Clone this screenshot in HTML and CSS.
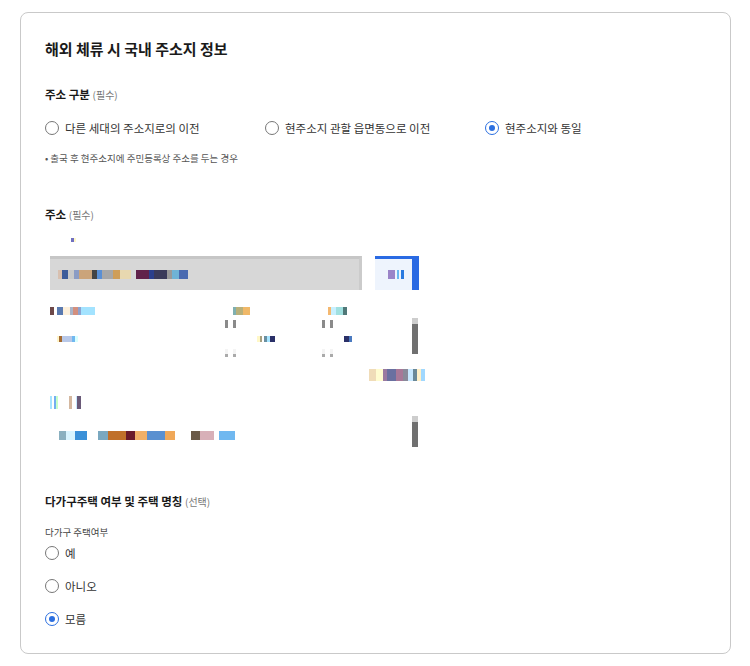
FILE: index.html
```html
<!DOCTYPE html>
<html>

<head>
    <link rel="stylesheet" href="styles.css">
</head>

<body>
  <div class="card">
    <h2 class="card-title">해외 체류 시 국내 주소지 정보</h2>

    <div class="field">
      <div class="field-label">주소 구분 <span class="hint">(필수)</span></div>
      <div class="radio-row">
        <label class="radio"><span class="dot"></span>다른 세대의 주소지로의 이전</label>
        <label class="radio"><span class="dot"></span>현주소지 관할 읍면동으로 이전</label>
        <label class="radio"><span class="dot on"></span>현주소지와 동일</label>
      </div>
      <p class="note">• 출국 후 현주소지에 주민등록상 주소를 두는 경우</p>
    </div>

    <div class="field addr">
      <div class="field-label">주소 <span class="hint">(필수)</span></div>
      <div class="frame">
        <div class="frame-top"><span class="blob b-tiny"></span></div>
        <div class="search">
          <div class="search-input"><span class="blob b-query"></span></div>
          <div class="search-btn"><span class="blob b-btn"></span></div>
        </div>
        <div class="results">
          <div class="res-row">
            <span class="blob b-r1 w45"></span>
            <span class="blob b-r2 w17 at138"></span>
            <span class="blob b-r3 w19 at78"></span>
          </div>
          <div class="res-row ticks">
            <span class="tick at175"></span><span class="tick at5"></span>
            <span class="tick at86"></span><span class="tick at5"></span>
          </div>
          <div class="res-row">
            <span class="blob b-r4 w21 at7"></span>
            <span class="blob b-r5 w18 at179"></span>
            <span class="blob b-r6 w8 at69"></span>
          </div>
          <div class="res-row ticks light">
            <span class="tick at175"></span><span class="tick at5"></span>
            <span class="tick at86"></span><span class="tick at5"></span>
          </div>
          <span class="scroll s1"></span>
        </div>
        <div class="res-row tall end"><span class="blob b-r7 w56"></span></div>
        <div class="res-row tall gap13">
          <span class="blob b-r8 w8"></span>
          <span class="blob b-r9 w12 at11"></span>
        </div>
        <div class="results low">
          <div class="res-row tall"><span class="blob b-r10 w176 at9"></span></div>
          <span class="scroll s2"></span>
        </div>
      </div>
    </div>

    <div class="field multi">
      <div class="field-label">다가구주택 여부 및 주택 명칭 <span class="hint">(선택)</span></div>
      <div class="sub-label">다가구 주택여부</div>
      <div class="radio-col">
        <label class="radio"><span class="dot"></span>예</label>
        <label class="radio"><span class="dot"></span>아니오</label>
        <label class="radio"><span class="dot on"></span>모름</label>
      </div>
    </div>
  </div>
</body>
</html>
```

FILE: styles.css
```css
body {
  font-family: 'Noto Sans CJK KR', 'Noto Sans', sans-serif;
  background-color: #fff;
  color: #222;
  margin: 0;
  padding: 12px 0 0 20px;
}

.card {
  width: 711px;
  height: 642px;
  border: 1px solid #c9c9c9;
  border-radius: 8px;
  padding: 0 24px;
  box-sizing: border-box;
}

.card-title {
  font-size: 15px;
  font-weight: bold;
  margin: 25px 0 0;
  line-height: 22px;
  color: #1a1a1a;
}

.field {
  margin-top: 26px;
}

.field-label {
  font-size: 11.5px;
  font-weight: bold;
  line-height: 16px;
  color: #1a1a1a;
}

.hint {
  font-size: 10px;
  font-weight: normal;
  color: #777;
}

.radio-row {
  display: flex;
  margin-top: 16px;
}

.radio-row .radio {
  width: 220px;
}

.radio {
  display: flex;
  align-items: center;
  font-size: 11.5px;
  line-height: 18px;
  color: #333;
}

.dot {
  width: 14px;
  height: 14px;
  border: 1.5px solid #777;
  border-radius: 50%;
  box-sizing: border-box;
  margin-right: 6px;
  position: relative;
}

.dot.on {
  border-color: #2b6fe0;
}

.dot.on::after {
  content: "";
  position: absolute;
  left: 2.5px;
  top: 2.5px;
  width: 6px;
  height: 6px;
  border-radius: 50%;
  background-color: #2b6fe0;
}

.note {
  font-size: 9.5px;
  color: #555;
  margin: 14px 0 0;
  line-height: 14px;
}

.addr {
  margin-top: 41px;
}

.multi {
  margin-top: 51px;
}

.frame {
  width: 375px;
  margin-left: 5px;
}

.frame-top {
  height: 33px;
  display: flex;
  align-items: center;
}

.search {
  display: flex;
  gap: 13px;
  height: 34px;
}

.search-input {
  width: 312px;
  background-color: #d7d7d7;
  border-top: 3px solid #c6c6c6;
  border-right: 3px solid #cbcbcb;
  box-sizing: border-box;
  display: flex;
  align-items: center;
  padding-left: 8px;
}

.search-btn {
  width: 44px;
  background-color: #eef4fd;
  border-top: 3px solid #2a6ae3;
  border-right: 7px solid #2a6ae3;
  box-sizing: border-box;
  display: flex;
  align-items: center;
  justify-content: center;
}

.results {
  position: relative;
  margin-top: 17px;
}

.results.low {
  margin-top: 0;
  padding-top: 9px;
}

.res-row {
  display: flex;
  height: 8px;
  margin-bottom: 5px;
}

.res-row.tall {
  height: 14px;
  align-items: center;
  margin: 10px 0 0;
}

.res-row.gap13 {
  margin-top: 13px;
}

.res-row.end {
  justify-content: flex-end;
  margin-top: 11px;
}

.ticks {
  height: 8px;
  margin: 4px 0 8px;
}

.ticks.light .tick {
  background: linear-gradient(#f4f4f4 60%, #aaa 60%);
}

.tick {
  width: 3px;
  height: 8px;
  background-color: #8a8a8a;
}

.blob {
  display: block;
  height: 8px;
}

.b-tiny {
  width: 5px;
  height: 4px;
  margin-left: 21px;
  background: linear-gradient(90deg, #7070c0 60%, #fff7c8 60%);
}

.b-query {
  width: 130px;
  height: 9px;
  background: linear-gradient(90deg, #d8c0b0 0 3%, #3d5b9a 3% 8%, #c9c9c9 8% 12%, #8b9cc4 12% 16%, #cba47a 16% 26%, #444 26% 30%, #5a8fd4 30% 34%, #a7a7a7 34% 42%, #cf9e58 42% 48%, #e8d8b0 48% 56%, #d8d8d8 56% 60%, #61224a 60% 70%, #2b3f8c 70% 74%, #3a3a5a 74% 84%, #999 84% 88%, #6fb3d6 88% 93%, #4a6ab0 93% 100%);
}

.b-btn {
  width: 16px;
  height: 9px;
  margin-left: 4px;
  background: linear-gradient(90deg, #9a84c8 0 45%, #eef4fd 45% 55%, #6bb8f0 55% 70%, #eef4fd 70% 80%, #2a7ae0 80% 100%);
}

.b-r1 { background: linear-gradient(90deg, #6d4848 0 8%, #fff 8% 16%, #5a7ab0 16% 28%, #fdf0dc 28% 44%, #a9b5c9 44% 52%, #d38f7e 52% 62%, #8da2d0 62% 70%, #a3e3ff 70% 100%); }
.b-r2 { background: linear-gradient(90deg, #7fb0b0 0 20%, #b8b07a 20% 60%, #f0b868 60% 100%); }
.b-r3 { background: linear-gradient(90deg, #f4b870 0 15%, #c8f0ff 15% 40%, #a0e0e0 40% 80%, #507878 80% 100%); }
.b-r4 { height: 6px; background: linear-gradient(90deg, #fff4c8 0 10%, #a46a30 10% 25%, #b8c8e8 25% 70%, #70b8f0 70% 88%, #d8ffff 88% 100%); }
.b-r5 { height: 6px; background: linear-gradient(90deg, #fff8c8 0 15%, #a8a080 15% 30%, #fff 30% 40%, #6a8fa0 40% 55%, #a6e4ff 55% 72%, #2a3068 72% 100%); }
.b-r6 { height: 6px; background: linear-gradient(90deg, #2a3068 0 60%, #4a7ac0 60% 100%); }
.b-r7 { height: 12px; background: linear-gradient(90deg, #f0dcb8 0 13%, #fffcd0 13% 25%, #9a7aa0 25% 32%, #6a70a0 32% 48%, #a87898 48% 60%, #8a8a9a 60% 70%, #c8e8ff 70% 78%, #6a8898 78% 86%, #fff0c8 86% 92%, #a0d8ff 92% 100%); }
.b-r8 { height: 13px; background: linear-gradient(90deg, #a8e4ff 0 30%, #fff 30% 45%, #74aef0 45% 70%, #c8ffc8 70% 100%); }
.b-r9 { height: 13px; background: linear-gradient(90deg, #d4b8a0 0 25%, #fff 25% 55%, #c8eaff 55% 70%, #6a5a78 70% 100%); }
.b-r10 { height: 9px; background: linear-gradient(90deg, #8ab0c0 0 4%, #d8f4ff 4% 9%, #3a90d8 9% 16%, #fff 16% 22%, #7aa8c0 22% 28%, #c0702a 28% 38%, #6a1a2a 38% 43%, #f0b068 43% 50%, #5a90d0 50% 60%, #f0a858 60% 66%, #fff 66% 75%, #6a5a48 75% 80%, #d8b0b8 80% 88%, #fff 88% 91%, #70b8f0 91% 100%); }

.w8 { width: 8px; }
.w12 { width: 12px; }
.w17 { width: 17px; }
.w18 { width: 18px; }
.w19 { width: 19px; }
.w21 { width: 21px; }
.w45 { width: 45px; }
.w56 { width: 56px; }
.w176 { width: 176px; }

.at5 { margin-left: 5px; }
.at7 { margin-left: 7px; }
.at9 { margin-left: 9px; }
.at11 { margin-left: 11px; }
.at69 { margin-left: 69px; }
.at78 { margin-left: 78px; }
.at86 { margin-left: 86px; }
.at138 { margin-left: 138px; }
.at175 { margin-left: 175px; }
.at179 { margin-left: 179px; }

.scroll {
  position: absolute;
  right: 7px;
  width: 6px;
  background: linear-gradient(#cdcdcd 18%, #707070 18%);
}

.s1 {
  top: 11px;
  height: 36px;
}

.s2 {
  top: 7px;
  height: 31px;
}

.sub-label {
  font-size: 9.5px;
  color: #444;
  margin-top: 15px;
  line-height: 14px;
}

.radio-col {
  display: flex;
  flex-direction: column;
  gap: 15px;
  margin-top: 5px;
}
```
